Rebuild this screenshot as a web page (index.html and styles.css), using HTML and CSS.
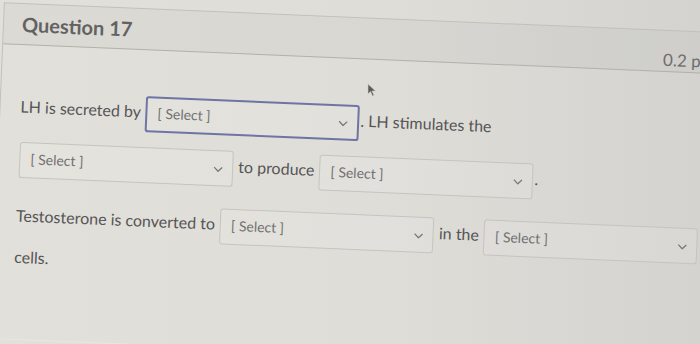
FILE: index.html
```html
<!DOCTYPE html>
<html lang="en">
<head>
    <meta charset="UTF-8">
    <meta name="viewport" content="width=device-width, initial-scale=1.0">
    <title>Question 17</title>
    <link rel="stylesheet" href="styles.css">
</head>
<body>

    <div class="question">
        <div class="question-header">
            <span class="question-name">Question 17</span>
            <span class="question-points">0.2 pts</span>
        </div>

        <div class="question-body">
            <p class="question-text">LH is secreted by <span class="select focused"><span>[ Select ]</span><svg class="chevron" width="10" height="6" viewBox="0 0 10 6"><polyline points="1,1 5,5 9,1"/></svg></span>. LH stimulates the <span class="select"><span>[ Select ]</span><svg class="chevron" width="10" height="6" viewBox="0 0 10 6"><polyline points="1,1 5,5 9,1"/></svg></span> to produce <span class="select"><span>[ Select ]</span><svg class="chevron" width="10" height="6" viewBox="0 0 10 6"><polyline points="1,1 5,5 9,1"/></svg></span>.</p>
            <p class="question-text">Testosterone is converted to <span class="select"><span>[ Select ]</span><svg class="chevron" width="10" height="6" viewBox="0 0 10 6"><polyline points="1,1 5,5 9,1"/></svg></span> in the <span class="select"><span>[ Select ]</span><svg class="chevron" width="10" height="6" viewBox="0 0 10 6"><polyline points="1,1 5,5 9,1"/></svg></span> cells.</p>
        </div>
    </div>

    <svg class="cursor" width="10" height="14" viewBox="0 0 10 14">
        <path d="M1 1 L1 11 L3.5 8.5 L5.5 13 L7 12.3 L5 8 L8.5 8 Z"/>
    </svg>

</body>
</html>
```

FILE: styles.css
```css
body {
    margin: 0;
    height: 344px;
    overflow: hidden;
    font-family: Lato, "Open Sans", sans-serif;
    color: #555555;
    background: linear-gradient(to right, #e2e0db 0%, #dfddd8 55%, #d4d3cf 100%);
}

.question {
    width: 730px;
    margin: 2px 0 0 4px;
    border: 1px solid #c2c0bb;
    border-bottom-color: #e8e6e2;
    transform: rotate(2.4deg);
    transform-origin: -4px -2px;
}

.question-header {
    height: 40px;
    display: flex;
    align-items: center;
    justify-content: space-between;
    padding: 0 19px 0 18px;
    border-bottom: 1px solid #b3b1ac;
    background-color: rgba(0, 0, 0, 0.025);
}

.question-name {
    font-size: 20px;
    font-weight: 700;
    color: #626262;
}

.question-points {
    margin-top: 16px;
    font-size: 17px;
    color: #6e6e6e;
}

.question-body {
    padding: 38px 20px 69px;
}

.question-text {
    margin: 0;
    font-size: 16px;
    line-height: 27px;
}

.question-text + .question-text {
    margin-top: 7px;
}

.select {
    display: inline-flex;
    align-items: center;
    justify-content: space-between;
    box-sizing: border-box;
    width: 214px;
    height: 36px;
    margin: 7.5px 1px;
    padding: 0 9px 3px 10px;
    vertical-align: middle;
    border: 1px solid #c6c4bf;
    border-radius: 3px;
    background-color: rgba(255, 255, 255, 0.1);
    font-size: 14px;
    color: #707070;
}

.select.focused {
    border: 2px solid #6e74a4;
}

.chevron {
    margin-top: 5px;
    fill: none;
    stroke: #7a7a7a;
    stroke-width: 1.3;
}

.cursor {
    position: absolute;
    left: 367px;
    top: 83px;
    fill: #5c5c5c;
    stroke: #cfcdc8;
    stroke-width: 0.6;
}
```
